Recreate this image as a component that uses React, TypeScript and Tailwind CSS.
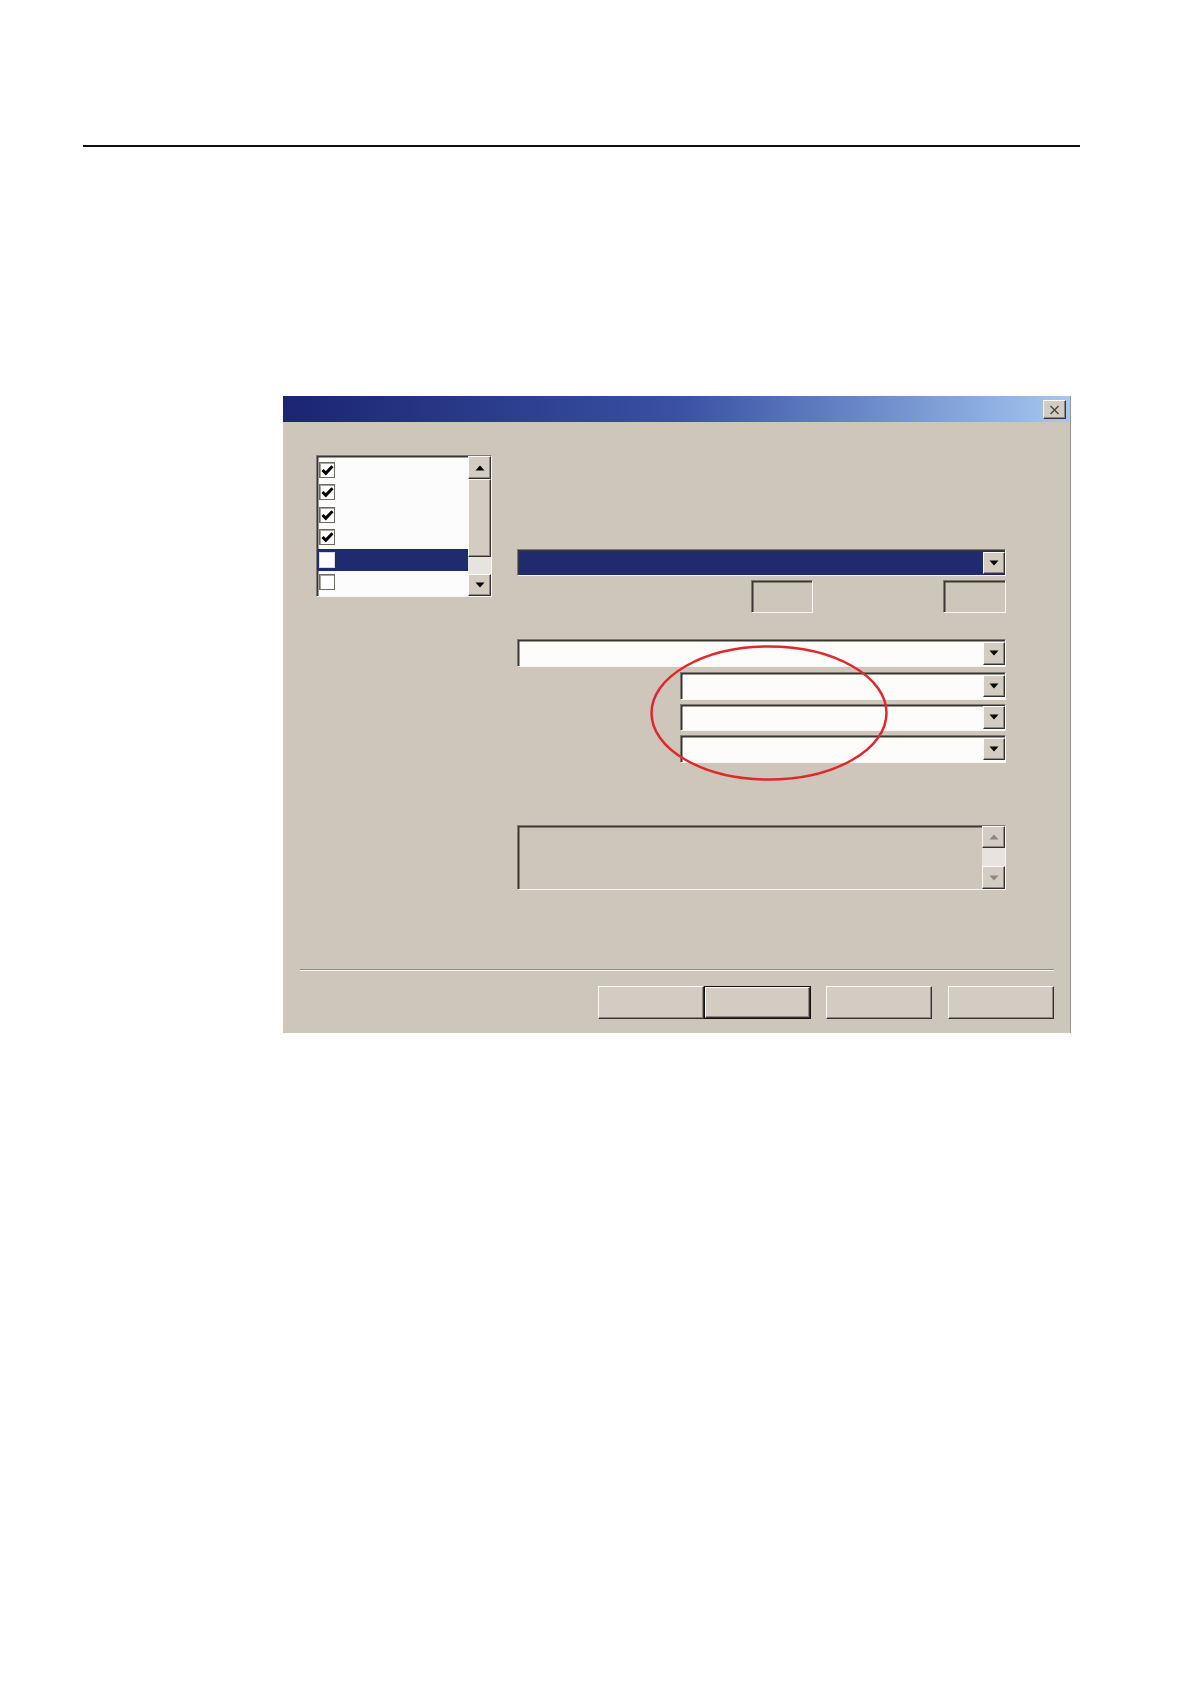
import React from "react";

const sunken =
  "border-[1.5px] border-t-[#7f7a73] border-l-[#7f7a73] border-r-[#f8f6f2] border-b-[#f8f6f2] shadow-[inset_1.5px_1.5px_0_#3a3733]";
const raised =
  "bg-[#d2ccc2] border-[1.5px] border-t-[#fbfaf7] border-l-[#fbfaf7] border-r-[#34312e] border-b-[#34312e] shadow-[inset_-1px_-1px_0_#8d8880]";

function DownArrow({ color = "#000" }: { color?: string }) {
  return (
    <svg width="10" height="6" viewBox="0 0 10 6">
      <polygon points="0.5,0.5 9.5,0.5 5,5.5" fill={color} />
    </svg>
  );
}
function UpArrow({ color = "#000" }: { color?: string }) {
  return (
    <svg width="10" height="6" viewBox="0 0 10 6">
      <polygon points="0.5,5.5 9.5,5.5 5,0.5" fill={color} />
    </svg>
  );
}

function Combo({ selected = false, className = "" }: { selected?: boolean; className?: string }) {
  return (
    <div className={`${sunken} flex ${selected ? "bg-[#1f2a6f]" : "bg-[#fdfcfb]"} ${className}`}>
      <div className="flex-1" />
      <div className={`${raised} w-[22px] my-[1.5px] mr-[0.5px] flex items-center justify-center`}>
        <DownArrow />
      </div>
    </div>
  );
}

function Check({ checked, selected }: { checked: boolean; selected?: boolean }) {
  return (
    <div
      className={`w-[16px] h-[16px] bg-white flex items-center justify-center ${
        selected
          ? "border border-[#d8d6e0]"
          : "border-[1.5px] border-[#6f6a64] shadow-[inset_1px_1px_0_#a9a49c]"
      }`}
    >
      {checked && (
        <svg width="13" height="12" viewBox="0 0 13 12">
          <polyline points="1.5,6 4.8,9.3 11.5,2.3" fill="none" stroke="#000" strokeWidth="3" />
        </svg>
      )}
    </div>
  );
}

function Row({ checked, selected }: { checked: boolean; selected?: boolean }) {
  return (
    <div className={`h-[22.5px] flex items-center pl-[2px] ${selected ? "bg-[#1f2a6f]" : ""}`}>
      <Check checked={checked} selected={selected} />
    </div>
  );
}

function Button({ isDefault = false }: { isDefault?: boolean }) {
  if (isDefault) {
    return (
      <div className="w-[107px] h-[33px] border-[1.5px] border-[#111]">
        <div className={`${raised} w-full h-full`} />
      </div>
    );
  }
  return <div className={`${raised} w-[106px] h-[33px]`} />;
}

export default function App() {
  return (
    <div className="w-[1190px] h-[1684px] bg-white font-['Liberation_Sans',sans-serif]">
      <div className="pt-[145px] pl-[83px]">
        <div className="w-[997px] h-[1.5px] bg-[#111]" />
      </div>

      <div className="relative ml-[283px] mt-[249.5px] w-[788px] h-[637px] bg-[#cec6bb] border-r border-r-[#9a958d] flex flex-col">
        {/* Title bar */}
        <div className="h-[26px] bg-linear-to-r from-[#1b2572] via-[#3a50a3] via-50% to-[#a6c8f0] flex justify-end items-start pt-[4px] pr-[4px]">
          <div className={`${raised} w-[23px] h-[19px] flex items-center justify-center`}>
            <svg width="11" height="10" viewBox="0 0 11 10">
              <line x1="1.5" y1="1" x2="9.5" y2="9" stroke="#4a4744" strokeWidth="1.4" />
              <line x1="9.5" y1="1" x2="1.5" y2="9" stroke="#4a4744" strokeWidth="1.4" />
            </svg>
          </div>
        </div>

        {/* Body */}
        <div className="flex items-start pt-[33px] pl-[33px] h-[468px]">
          {/* Checked listbox */}
          <div className={`${sunken} w-[176px] h-[142px] bg-[#fdfcfd] flex`}>
            <div className="flex-1 pt-[2.5px]">
              <Row checked />
              <Row checked />
              <Row checked />
              <Row checked />
              <Row checked={false} selected />
              <Row checked={false} />
            </div>
            <div className="w-[23px] flex flex-col">
              <div className={`${raised} h-[23px] flex items-center justify-center`}>
                <UpArrow />
              </div>
              <div className={`${raised} h-[78px]`} />
              <div className="flex-1 bg-[#e7e4df]" />
              <div className={`${raised} h-[22px] flex items-center justify-center`}>
                <DownArrow />
              </div>
            </div>
          </div>

          {/* Right column */}
          <div className="ml-[25px] w-[489px] flex flex-col">
            <Combo selected className="mt-[94px] h-[27px]" />
            <div className="mt-[4px] h-[33px] flex">
              <div className={`${sunken} ml-[234px] w-[64px] h-full`} />
              <div className={`${sunken} ml-[130px] w-[63px] h-full shrink-0`} />
            </div>
            <Combo className="mt-[26px] h-[28px]" />
            <Combo className="mt-[5px] ml-[163px] h-[27.5px]" />
            <Combo className="mt-[4px] ml-[163px] h-[27.5px]" />
            <Combo className="mt-[4px] ml-[163px] h-[27.5px]" />

            <div className={`${sunken} mt-[62.5px] h-[65px] flex`}>
              <div className="flex-1" />
              <div className="w-[23px] flex flex-col">
                <div className={`${raised} h-[22px] flex items-center justify-center`}>
                  <UpArrow color="#8c877f" />
                </div>
                <div className="flex-1 bg-[#e7e4df]" />
                <div className={`${raised} h-[23px] flex items-center justify-center`}>
                  <DownArrow color="#8c877f" />
                </div>
              </div>
            </div>
          </div>
        </div>

        {/* Separator */}
        <div className="mt-[79px] ml-[17px] mr-[16px] border-t border-b border-t-[#8e8981] border-b-[#fbfaf7]" />

        {/* Buttons */}
        <div className="mt-[15px] flex justify-end pr-[16px]">
          <Button />
          <Button isDefault />
          <div className="ml-[15px]">
            <Button />
          </div>
          <div className="ml-[16px]">
            <Button />
          </div>
        </div>

        {/* Red annotation ellipse */}
        <svg
          className="absolute left-[367px] top-[249px]"
          width="238"
          height="136"
          viewBox="0 0 238 136"
        >
          <ellipse cx="119" cy="68" rx="117.5" ry="66.5" fill="none" stroke="#e0282b" strokeWidth="2.5" />
        </svg>
      </div>
    </div>
  );
}
